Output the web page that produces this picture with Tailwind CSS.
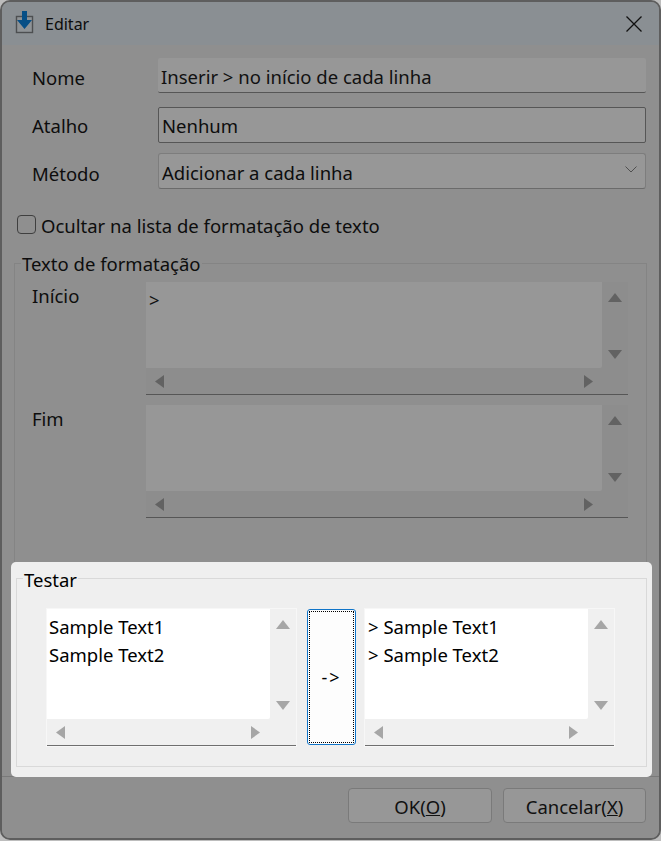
<!DOCTYPE html>
<html><head><meta charset="utf-8">
<script src="https://cdn.jsdelivr.net/npm/@tailwindcss/browser@4"></script>
</head>
<body class="w-[661px] h-[841px] overflow-hidden bg-[#bdbdbd] font-['Noto_Sans','Open_Sans',sans-serif] text-[18.5px] text-[#0d0d0d]">
<div class="relative w-[661px] h-[840px] bg-[#8f8f8f] border-2 border-[#5e5e5e] rounded-[10px] overflow-hidden flex flex-col">
  <!-- title -->
  <div class="h-[43px] shrink-0 bg-[#8a8f93] flex items-center justify-between pl-[13px] pr-[15px]">
    <div class="flex items-center gap-[10px]">
      <svg width="20" height="24" viewBox="0 0 20 24" class="-mt-[2px]"><rect x="1.500" y="5.500" width="16" height="16" fill="#8f9396" stroke="#4d4f51" stroke-width="1.400"/><path d="M7 0h5v9h5l-7.500 9L2 9h5z" fill="#074f86"/></svg>
      <span class="text-[16px] leading-none">Editar</span>
    </div>
    <svg width="16" height="16" viewBox="0 0 16 16" stroke="#111" stroke-width="1.300" class="mr-[2px]"><path d="M.5.500l15 15M15.500.500l-15 15"/></svg>
  </div>
  <!-- form -->
  <div class="flex flex-col pl-[30px] pr-[13px] pt-[13px]">
    <div class="flex items-center h-[35px]">
      <label class="w-[126px] pt-[5px]">Nome</label>
      <div class="flex-1 h-[35px] bg-[#979797] border-b-[1.5px] border-[#565656] rounded-[2px] flex items-center pl-[3px] pt-[3px] text-[#111]">Inserir &gt; no início de cada linha</div>
    </div>
    <div class="flex items-center h-[36px] mt-[14px]">
      <label class="w-[126px] pt-[2px]">Atalho</label>
      <div class="flex-1 h-[36px] bg-[#979797] border border-[#565656] rounded-[2px] flex items-center pl-[3px] pt-[2px]">Nenhum</div>
    </div>
    <div class="flex items-center h-[36px] mt-[10px]">
      <label class="w-[126px] pt-[6px]">Método</label>
      <div class="flex-1 h-[36px] bg-[#979797] border border-[#7d7d7d] border-b-[#6b6b6b] rounded-[3px] flex items-center justify-between pl-[3px] pr-[8px]">
        <span class="pt-[4px]">Adicionar a cada linha</span>
        <svg width="12" height="7" viewBox="0 0 12 7" fill="none" stroke="#4f4f4f" class="-mt-[3px]"><path d="M.5.500l5.500 5.500 5.500-5.500"/></svg>
      </div>
    </div>
  </div>
  <div class="flex items-center ml-[15px] mt-[25px] gap-[5px] h-[20px]">
    <span class="w-[19px] h-[19px] border border-[#3f3f3f] rounded-[4px] bg-[#8f8f8f]"></span>
    <span class="pt-[3px]">Ocultar na lista de formatação de texto</span>
  </div>
  <!-- format group -->
  <div class="relative ml-[12px] mr-[12px] mt-[29px] h-[500px] border border-[#848484] pl-[131px] pr-[18px] pt-[18px]">
    <span class="absolute left-[6px] -top-[12px] bg-[#8f8f8f] px-[1px] leading-[24px]">Texto de formatação</span>
    <span class="absolute left-[17px] top-[20px] leading-[24px]">Início</span>
    <span class="absolute left-[17px] top-[143px] leading-[24px]">Fim</span>
    <div class="flex flex-col gap-[10px]">
      <div class="h-[113px] bg-[#8d8d8d] border-b-[1.5px] border-[#565656] grid grid-cols-[1fr_26px] grid-rows-[1fr_26px]">
        <div class="bg-[#979797] rounded-br-[2px] pl-[3px] pt-[6px] leading-[24px] text-[#111]">&gt;</div>
        <div class="flex flex-col items-center justify-between pt-[11px] pb-[9px]">
          <svg width="14" height="9" viewBox="0 0 14 9" fill="#626262"><path d="M7 0l7 9H0z"/></svg>
          <svg width="14" height="9" viewBox="0 0 14 9" fill="#626262"><path d="M7 9l7-9H0z"/></svg>
        </div>
        <div class="flex items-center justify-between pl-[9px] pr-[9px]">
          <svg width="9" height="13" viewBox="0 0 9 13" fill="#626262"><path d="M0 6.500L9 0v13z"/></svg>
          <svg width="9" height="13" viewBox="0 0 9 13" fill="#626262"><path d="M9 6.500L0 0v13z"/></svg>
        </div>
        <div></div>
      </div>
      <div class="h-[113px] bg-[#8d8d8d] border-b-[1.5px] border-[#565656] grid grid-cols-[1fr_26px] grid-rows-[1fr_26px]">
        <div class="bg-[#979797] rounded-br-[2px]"></div>
        <div class="flex flex-col items-center justify-between pt-[11px] pb-[9px]">
          <svg width="14" height="9" viewBox="0 0 14 9" fill="#626262"><path d="M7 0l7 9H0z"/></svg>
          <svg width="14" height="9" viewBox="0 0 14 9" fill="#626262"><path d="M7 9l7-9H0z"/></svg>
        </div>
        <div class="flex items-center justify-between pl-[9px] pr-[9px]">
          <svg width="9" height="13" viewBox="0 0 9 13" fill="#626262"><path d="M0 6.500L9 0v13z"/></svg>
          <svg width="9" height="13" viewBox="0 0 9 13" fill="#626262"><path d="M9 6.500L0 0v13z"/></svg>
        </div>
        <div></div>
      </div>
    </div>
  </div>
  <!-- footer -->
  <div class="absolute left-0 right-0 bottom-0 h-[62px] bg-[#8f8f8f] border-t border-[#7a7a7a] flex justify-end gap-[11px] pr-[13px] pt-[11px]">
    <div class="w-[144px] h-[35px] bg-[#979797] border border-[#7a7a7a] rounded-[4px] flex items-center justify-center pt-[3px] text-[#111]"><span>OK(<u>O</u>)</span></div>
    <div class="w-[143px] h-[35px] bg-[#979797] border border-[#7a7a7a] rounded-[4px] flex items-center justify-center pt-[3px] text-[#111]"><span>Cancelar(<u>X</u>)</span></div>
  </div>
  <!-- highlighted test panel -->
  <div class="absolute left-[9px] top-[560px] w-[641px] h-[215px] bg-[#efefef] rounded-[5px] p-[5px] pb-[10px] text-black">
    <div class="relative h-[189px] mt-[11px] border border-[#d9d9d9] pl-[30px] pt-[30px] flex">
      <span class="absolute left-[6px] -top-[11px] bg-[#efefef] px-[1px] leading-[24px]">Testar</span>
      <div class="w-[249px] h-[137px] bg-[#f0f0f0] border-b-[1.5px] border-[#6f6f6f] grid grid-cols-[1fr_26px] grid-rows-[1fr_26px] shadow-[0_0_0_1px_#f7f7f7]">
        <div class="bg-white rounded-br-[2px] pl-[2px] pt-[4px] leading-[28px]">Sample Text1<br>Sample Text2</div>
        <div class="flex flex-col items-center justify-between pt-[11px] pb-[9px]">
          <svg width="14" height="9" viewBox="0 0 14 9" fill="#a6a6a6"><path d="M7 0l7 9H0z"/></svg>
          <svg width="14" height="9" viewBox="0 0 14 9" fill="#a6a6a6"><path d="M7 9l7-9H0z"/></svg>
        </div>
        <div class="flex items-center justify-between pl-[9px] pr-[10px]">
          <svg width="9" height="13" viewBox="0 0 9 13" fill="#a6a6a6"><path d="M0 6.500L9 0v13z"/></svg>
          <svg width="9" height="13" viewBox="0 0 9 13" fill="#a6a6a6"><path d="M9 6.500L0 0v13z"/></svg>
        </div>
        <div></div>
      </div>
      <div class="ml-[11px] w-[49px] h-[136px] bg-[#fdfdfd] border border-[#0f74c8] rounded-[3px] p-[1px]">
        <div class="w-full h-full border border-dotted border-black flex items-center justify-center text-[18px] tracking-[2px] leading-none">-&gt;</div>
      </div>
      <div class="ml-[9px] w-[249px] h-[137px] bg-[#f0f0f0] border-b-[1.5px] border-[#6f6f6f] grid grid-cols-[1fr_26px] grid-rows-[1fr_26px] shadow-[0_0_0_1px_#f7f7f7]">
        <div class="bg-white rounded-br-[2px] pl-[3px] pt-[4px] leading-[28px]">&gt; Sample Text1<br>&gt; Sample Text2</div>
        <div class="flex flex-col items-center justify-between pt-[11px] pb-[9px]">
          <svg width="14" height="9" viewBox="0 0 14 9" fill="#a6a6a6"><path d="M7 0l7 9H0z"/></svg>
          <svg width="14" height="9" viewBox="0 0 14 9" fill="#a6a6a6"><path d="M7 9l7-9H0z"/></svg>
        </div>
        <div class="flex items-center justify-between pl-[9px] pr-[10px]">
          <svg width="9" height="13" viewBox="0 0 9 13" fill="#a6a6a6"><path d="M0 6.500L9 0v13z"/></svg>
          <svg width="9" height="13" viewBox="0 0 9 13" fill="#a6a6a6"><path d="M9 6.500L0 0v13z"/></svg>
        </div>
        <div></div>
      </div>
    </div>
  </div>
</div>
</body></html>
